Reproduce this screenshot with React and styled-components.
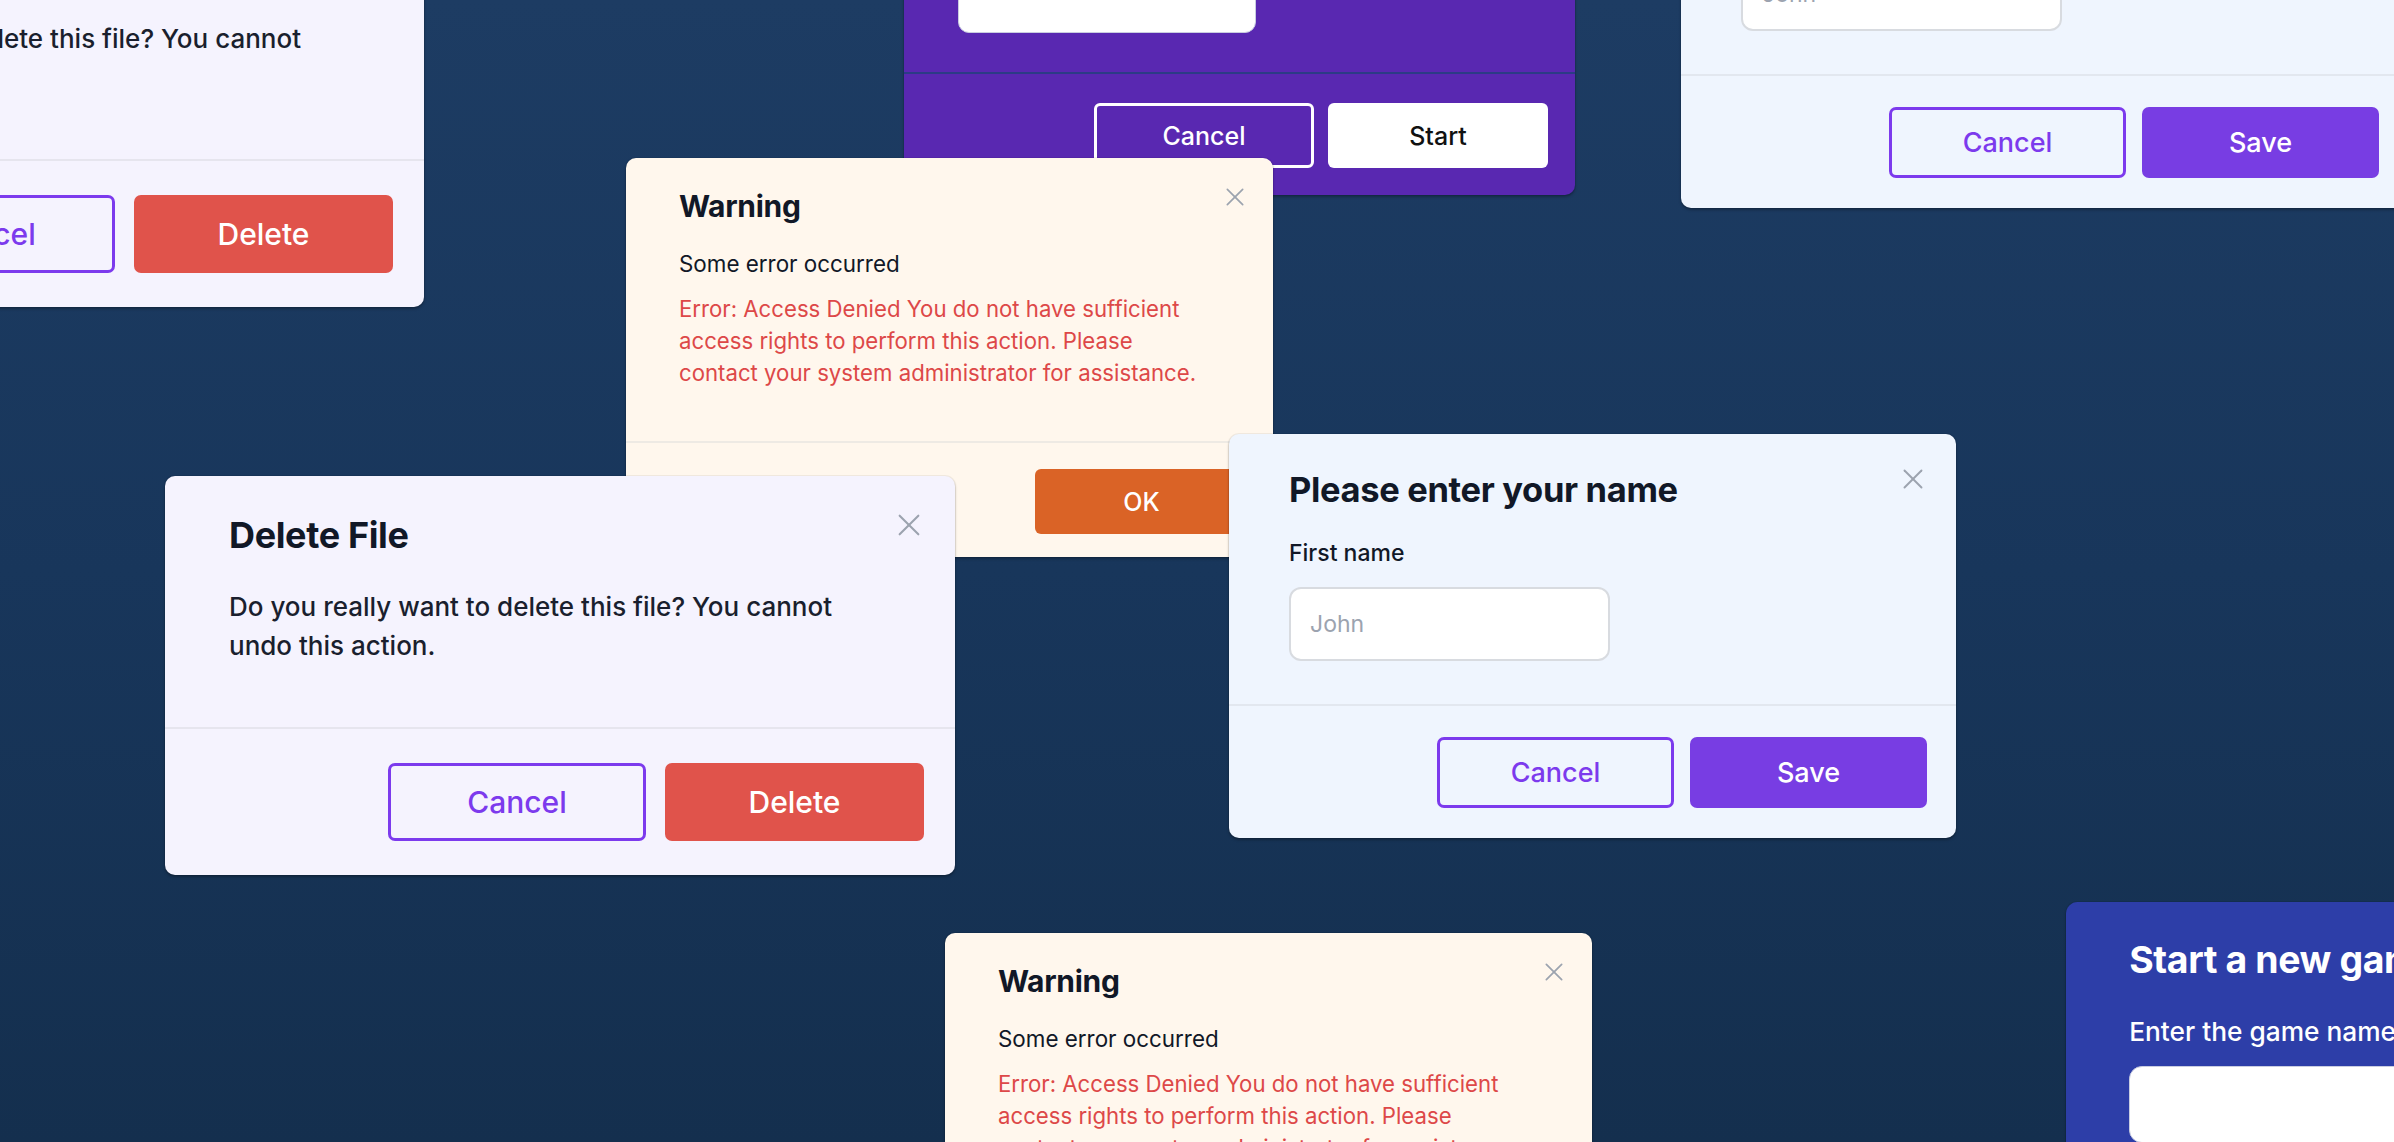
import React from 'react';
import styled, { createGlobalStyle } from 'styled-components';

const GlobalStyle = createGlobalStyle`
  html, body { margin: 0; padding: 0; }
  body {
    font-family: Inter, "Noto Sans", "Liberation Sans", sans-serif;
    -webkit-font-smoothing: antialiased;
  }
  *, *::before, *::after { box-sizing: border-box; }
`;

const Canvas = styled.main`
  position: relative;
  width: 100vw;
  height: 100vh;
  overflow: hidden;
  background: linear-gradient(180deg, #1d3c63 0%, #18365b 50%, #142f4e 100%);
`;

/* A dialog window placed on the free canvas */
const Window = styled.section`
  position: absolute;
  left: ${(p) => p.$x}px;
  top: ${(p) => p.$y}px;
  width: ${(p) => p.$w}px;
  background: ${(p) => p.$bg};
  border-radius: ${(p) => p.$r || 10}px;
  box-shadow: 0 2px 3px rgba(0, 0, 0, 0.28), 0 0 0 1px rgba(0, 0, 0, 0.05);
  display: flex;
  flex-direction: column;
`;

const Header = styled.header`
  display: flex;
  justify-content: space-between;
  align-items: flex-start;
  padding: ${(p) => p.$pad};
`;

const Title = styled.h2`
  margin: 0;
  font-size: ${(p) => p.$fs}px;
  line-height: 1.2;
  font-weight: 700;
  color: ${(p) => p.$color || '#111827'};
  letter-spacing: -0.01em;
  white-space: nowrap;
`;

const CloseBtn = styled.button`
  border: none;
  background: none;
  padding: 0;
  display: flex;
  cursor: pointer;
  color: #9ca3af;
  width: ${(p) => p.$size}px;
  height: ${(p) => p.$size}px;
  svg { width: 100%; height: 100%; }
`;

const CloseIcon = ({ size, stroke = 2 }) => (
  <CloseBtn $size={size} aria-label="Close">
    <svg viewBox="0 0 20 20" fill="none" stroke="currentColor" strokeWidth={stroke} strokeLinecap="round">
      <line x1="1.5" y1="1.5" x2="18.5" y2="18.5" />
      <line x1="18.5" y1="1.5" x2="1.5" y2="18.5" />
    </svg>
  </CloseBtn>
);

const Body = styled.div`
  display: flex;
  flex-direction: column;
  align-items: flex-start;
  padding: ${(p) => p.$pad};
`;

const Text = styled.p`
  margin: ${(p) => p.$mt || 0}px 0 0;
  font-size: ${(p) => p.$fs}px;
  line-height: ${(p) => p.$lh}px;
  font-weight: ${(p) => p.$fw || 400};
  color: ${(p) => p.$color || '#111827'};
  max-width: ${(p) => (p.$maxw ? `${p.$maxw}px` : 'none')};
  white-space: ${(p) => (p.$nowrap ? 'nowrap' : 'normal')};
`;

const Field = styled.div`
  margin-top: ${(p) => p.$mt}px;
  width: ${(p) => p.$w}px;
  height: ${(p) => p.$h}px;
  flex: none;
  background: #ffffff;
  border: ${(p) => p.$border};
  border-radius: ${(p) => p.$r}px;
  display: flex;
  align-items: center;
  padding-left: ${(p) => p.$pl || 0}px;
  font-size: ${(p) => p.$fs || 20}px;
  color: #9ca3af;
`;

const Footer = styled.footer`
  display: flex;
  justify-content: flex-end;
  gap: ${(p) => p.$gap}px;
  padding: ${(p) => p.$pad};
  border-top: 2px solid ${(p) => p.$line};
`;

const Button = styled.button`
  width: ${(p) => p.$w}px;
  height: ${(p) => p.$h}px;
  border-radius: ${(p) => p.$r || 7}px;
  font-family: inherit;
  font-size: ${(p) => p.$fs}px;
  font-weight: 500;
  cursor: pointer;
  display: flex;
  align-items: center;
  justify-content: center;
  border: ${(p) => (p.$outline ? `3px solid ${p.$outline}` : 'none')};
  background: ${(p) => p.$bg || 'transparent'};
  color: ${(p) => p.$color};
`;

/* ---------- Dialog kinds ---------- */

const DeleteDialog = ({ x, y }) => (
  <Window $x={x} $y={y} $w={790} $bg="#f5f3fe">
    <Header $pad="38px 35px 0 64px">
      <Title $fs={36}>Delete File</Title>
      <CloseIcon size={22} stroke={1.9} />
    </Header>
    <Body $pad="30px 40px 62px 64px">
      <Text $fs={26} $lh={39} $fw={500} $color="#1a1f2e" $maxw={660}>
        Do you really want to delete this file? You cannot undo this action.
      </Text>
    </Body>
    <Footer $gap={19} $pad="34px 31px 34px" $line="#e6e5ee">
      <Button $w={258} $h={78} $fs={30} $outline="#7c3aed" $color="#7c3aed">Cancel</Button>
      <Button $w={259} $h={78} $fs={30} $bg="#e0534b" $color="#ffffff">Delete</Button>
    </Footer>
  </Window>
);

const WarningDialog = ({ x, y }) => (
  <Window $x={x} $y={y} $w={647} $bg="#fff7ed">
    <Header $pad="30px 29px 0 53px">
      <Title $fs={30}>Warning</Title>
      <CloseIcon size={18} stroke={1.9} />
    </Header>
    <Body $pad="24px 40px 52px 53px">
      <Text $fs={22.4} $lh={32} $color="#111827">Some error occurred</Text>
      <Text $mt={13} $fs={22.2} $lh={32} $color="#dd4848" $nowrap>
        Error: Access Denied You do not have sufficient
        <br />
        access rights to perform this action. Please
        <br />
        contact your system administrator for assistance.
      </Text>
    </Body>
    <Footer $gap={16} $pad="26px 25px 23px" $line="#eeeae4">
      <Button $w={213} $h={65} $fs={25} $r={6} $bg="#da6326" $color="#ffffff">OK</Button>
    </Footer>
  </Window>
);

const NameDialog = ({ x, y }) => (
  <Window $x={x} $y={y} $w={727} $bg="#eff5fe">
    <Header $pad="35px 33px 0 60px">
      <Title $fs={34.5}>Please enter your name</Title>
      <CloseIcon size={20} stroke={1.9} />
    </Header>
    <Body $pad="27px 33px 43px 60px">
      <Text $fs={23} $lh={32} $fw={500} $color="#111827">First name</Text>
      <Field $mt={18} $w={321} $h={74} $r={12} $border="2px solid #d8dbe0" $pl={19} $fs={23}>John</Field>
    </Body>
    <Footer $gap={16} $pad="31px 29px 30px" $line="#e2e7ef">
      <Button $w={237} $h={71} $fs={27} $outline="#7c3aed" $color="#7c3aed">Cancel</Button>
      <Button $w={237} $h={71} $fs={27} $bg="#783de3" $color="#ffffff">Save</Button>
    </Footer>
  </Window>
);

const GameDialog = ({ x, y, s, bg }) => {
  const k = (v) => Math.round(v * s * 10) / 10;
  return (
    <Window $x={x} $y={y} $w={k(671)} $bg={bg} $r={k(10)}>
      <Header $pad={`${k(31)}px ${k(27)}px 0 ${k(54)}px`}>
        <Title $fs={k(32)} $color="#ffffff">Start a new game</Title>
      </Header>
      <Body $pad={`${k(29)}px ${k(27)}px ${k(39)}px ${k(54)}px`}>
        <Text $fs={k(22.5)} $lh={k(26)} $fw={500} $color="#ffffff" $nowrap>Enter the game name</Text>
        <Field $mt={k(16)} $w={k(298)} $h={k(66)} $r={k(11)} $border="1px solid #c9cde0" />
      </Body>
      <Footer $gap={k(14)} $pad={`${k(29)}px ${k(27)}px ${k(27)}px`} $line="#2c3b86">
        <Button $w={k(220)} $h={k(65)} $fs={k(25)} $r={k(6)} $outline="#ffffff" $color="#ffffff">Cancel</Button>
        <Button $w={k(220)} $h={k(65)} $fs={k(25)} $r={k(6)} $bg="#ffffff" $color="#111111">Start</Button>
      </Footer>
    </Window>
  );
};

export default function App() {
  return (
    <>
      <GlobalStyle />
      <Canvas>
        <GameDialog x={904} y={-173} s={1} bg="#5928b1" />
        <DeleteDialog x={-366} y={-92} />
        <NameDialog x={1681} y={-196} />
        <WarningDialog x={626} y={158} />
        <WarningDialog x={945} y={933} />
        <GameDialog x={2066} y={902} s={1.17} bg="#2d3ea8" />
        <NameDialog x={1229} y={434} />
        <DeleteDialog x={165} y={476} />
      </Canvas>
    </>
  );
}
